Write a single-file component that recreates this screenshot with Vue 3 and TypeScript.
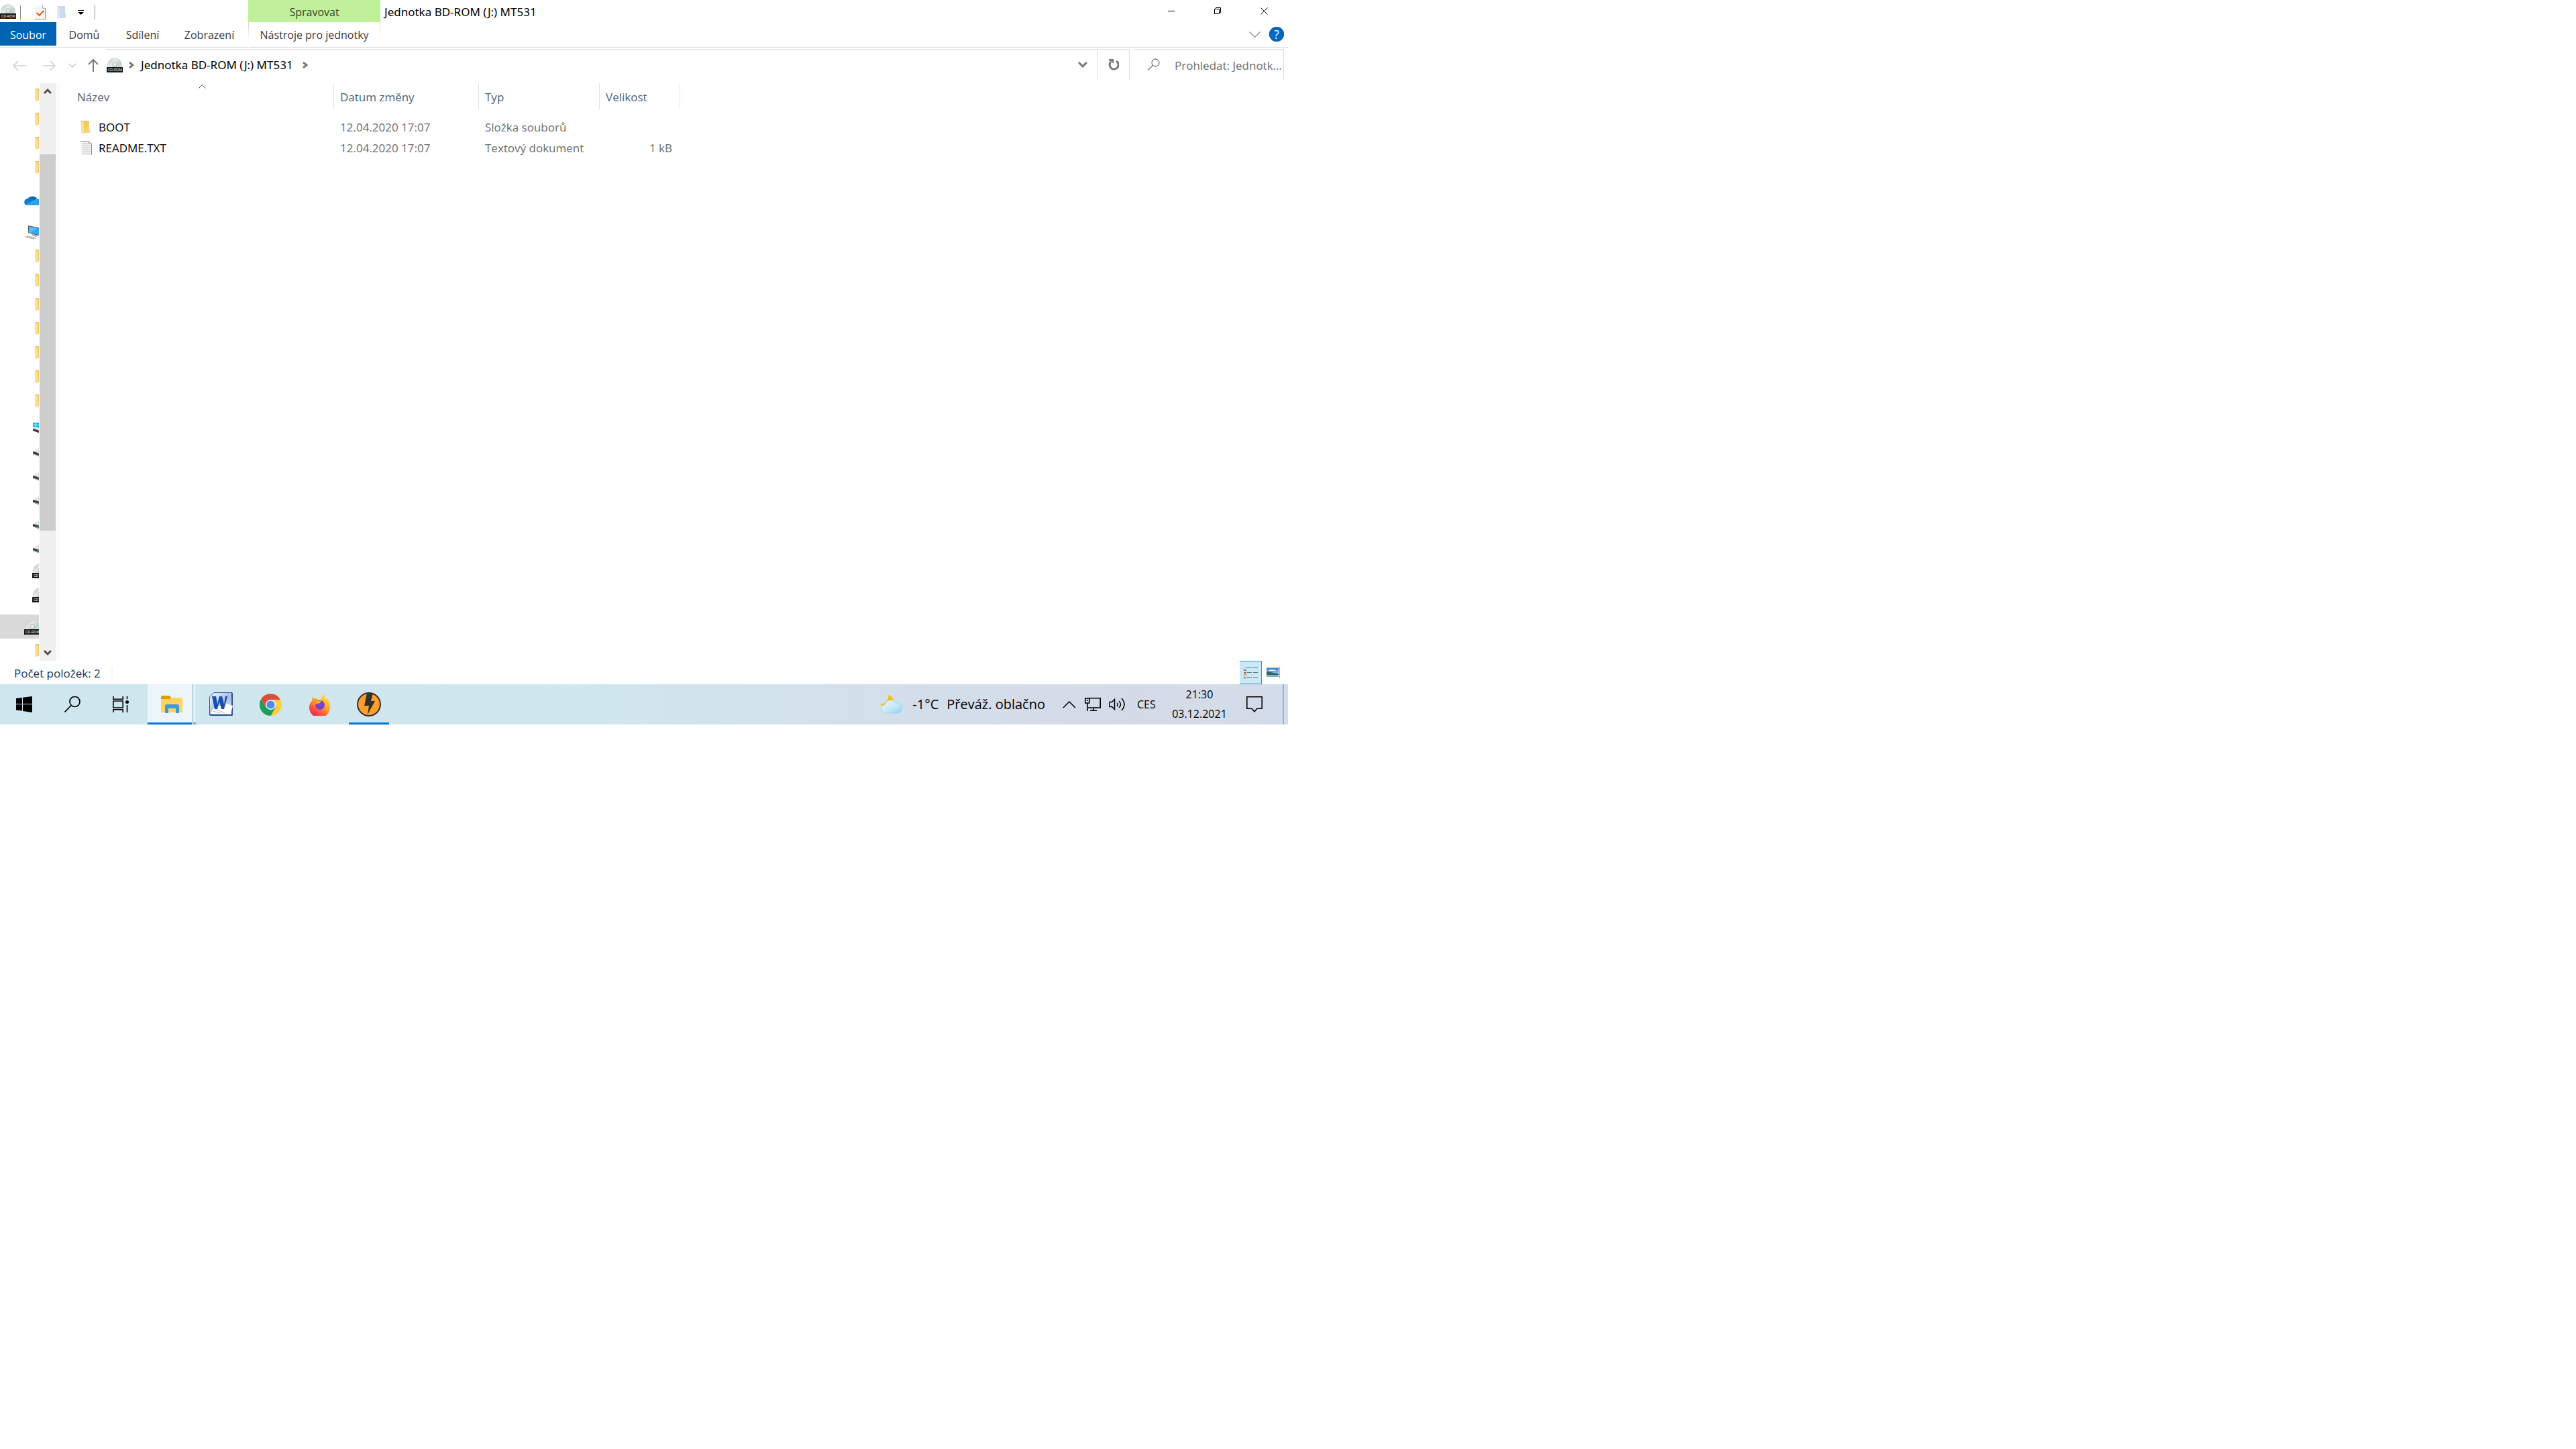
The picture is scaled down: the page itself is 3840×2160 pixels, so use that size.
<script setup lang="ts">
interface TreeRow {
  icon: string
  label: string
  width: number
  height: number
  kind: string
}

interface FileRow {
  icon: string
  name: string
  date: string
  type: string
  size: string
  width: number
  height: number
}

const folder = (label: string): TreeRow => ({ icon: 'folder', label, width: 13, height: 20, kind: 'folder' })
const disk = (label: string): TreeRow => ({ icon: 'disk', label, width: 20, height: 16, kind: 'disk' })
const disc = (label: string): TreeRow => ({ icon: 'disc', label, width: 24, height: 22, kind: 'disc' })

const tree: TreeRow[][] = [
  [folder('1'), folder('2'), folder('3'), folder('4')],
  [{ icon: 'cloud', label: 'OneDrive', width: 24, height: 16, kind: 'root' }],
  [
    { icon: 'computer', label: 'PC', width: 24, height: 22, kind: 'root' },
    folder('5'), folder('6'), folder('7'), folder('8'), folder('9'), folder('10'), folder('11'),
    { icon: 'system', label: 'C', width: 20, height: 16, kind: 'disk' },
    disk('D'), disk('E'), disk('F'), disk('G'), disk('H'),
    disc('I'), disc('J'),
  ],
  [{ icon: 'disc', label: 'MT531', width: 24, height: 22, kind: 'root selected' }, folder('12')],
]

const files: FileRow[] = [
  { icon: 'folder', name: 'BOOT', date: '12.04.2020 17:07', type: 'Složka souborů', size: '', width: 13, height: 20 },
  { icon: 'text', name: 'README.TXT', date: '12.04.2020 17:07', type: 'Textový dokument', size: '1 kB', width: 16, height: 21 },
]
</script>

<template>
  <svg class="defs" aria-hidden="true">
    <defs>
      <linearGradient id="gFront" x1="0" y1="0" x2="1" y2="0"><stop offset="0" stop-color="#ffdc82" /><stop offset="1" stop-color="#ffe9a6" /></linearGradient>
      <linearGradient id="gBack" x1="0" y1="0" x2="1" y2="1"><stop offset="0" stop-color="#e9c35c" /><stop offset="1" stop-color="#fbd777" /></linearGradient>
      <linearGradient id="gDisc" x1="0" y1="0" x2="1" y2="1"><stop offset="0" stop-color="#b9c2c1" /><stop offset=".35" stop-color="#e6eae9" /><stop offset=".6" stop-color="#bed4cc" /><stop offset="1" stop-color="#e2e4e4" /></linearGradient>
      <linearGradient id="gSky" x1="0" y1="0" x2="0" y2="1"><stop offset="0" stop-color="#2f7fe0" /><stop offset="1" stop-color="#dcebf5" /></linearGradient>
      <linearGradient id="gWord" x1="0" y1="0" x2="1" y2="1"><stop offset="0" stop-color="#f8fbff" /><stop offset=".5" stop-color="#a9bfe4" /><stop offset="1" stop-color="#dfe8f6" /></linearGradient>
      <linearGradient id="gFox" x1=".8" y1="0" x2=".2" y2="1"><stop offset="0" stop-color="#fff14a" /><stop offset=".45" stop-color="#ffa02a" /><stop offset=".75" stop-color="#ff4a3a" /><stop offset="1" stop-color="#f0107c" /></linearGradient>
      <linearGradient id="gCloud" x1="0" y1="0" x2="1" y2="1"><stop offset="0" stop-color="#eef8fe" /><stop offset=".6" stop-color="#c4e5f8" /><stop offset="1" stop-color="#8ccdf2" /></linearGradient>
    </defs>
    <symbol id="i-folder" viewBox="0 0 13 20">
      <path d="M0 0h12v11l1 1v6H2z" fill="url(#gBack)" />
      <path d="M0 0l4 3v15l1 2-5-2z" fill="url(#gFront)" />
    </symbol>
    <symbol id="i-disk" viewBox="0 0 20 16">
      <path d="M0 7l9-5 11 3v5l-9 1z" fill="#e2e3e8" />
      <path d="M0 7l11 3 9-3v4l-9 4-11-4z" fill="#333836" />
      <path d="M0 10l10 3v2L0 11z" fill="#aaa" />
      <path d="M7 10h2v1H7z" fill="#37d13b" />
    </symbol>
    <symbol id="i-system" viewBox="0 0 20 16">
      <path d="M0 9l9-6 11 3v5l-9 2z" fill="#e2e3e8" />
      <path d="M0 9l11 3 9-3v3l-9 4-11-4z" fill="#333836" />
      <path d="M7 12h2v1H7z" fill="#37d13b" />
      <path d="M0 0h4v3H0zM5 0h4v3H5zM0 4h4v3H0zM5 4h4v3H5z" fill="#00b7f1" />
    </symbol>
    <symbol id="i-disc" viewBox="0 0 24 22">
      <circle cx="12" cy="11" r="10.500" fill="url(#gDisc)" stroke="#c6cbcb" stroke-width=".6" />
      <circle cx="12" cy="10" r="3.400" fill="#dfe2e3" stroke="#a9b0b1" stroke-width=".7" />
      <circle cx="12" cy="10" r="1" fill="#fff" />
      <rect y="14" width="24" height="8" rx=".5" fill="#16181a" />
    </symbol>
    <symbol id="i-cloud" viewBox="0 0 24 16">
      <path d="M5 6a8 7 0 0 1 14-1l-6 4z" fill="#0364b8" />
      <path d="M5 5c3-1 6 0 14 5L3 15C-1 13-1 6 5 5z" fill="#0f78d4" />
      <path d="M19 5c6 0 7 9 2 10H4l-2-1 11-6z" fill="#28a3ea" />
    </symbol>
    <symbol id="i-computer" viewBox="0 0 24 22">
      <path d="M6 0l18 4v12L6 11z" fill="#51606c" />
      <path d="M7 1.500L23 5v9.500L7 10.500z" fill="#35a8f5" />
      <path d="M7 1.500L20 4.500 9 11l-2-.5z" fill="#57bafa" />
      <path d="M12 13l7 2v2l-8-2z" fill="#9aa4ab" />
      <path d="M0 17l5-2 13 3-4 3z" fill="#d5d9dd" />
      <path d="M1 17l14 3M4 16l13 3" stroke="#8e959c" stroke-dasharray="2 1" fill="none" />
    </symbol>
    <symbol id="i-text" viewBox="0 0 16 21">
      <path d="M0 .5h11l4.500 4.500v16H0z" fill="#fbfbfb" />
      <path d="M0 .5h11.500l4 4V21" stroke="#8d8d8d" fill="none" />
      <path d="M11.500.5v4h4" stroke="#8d8d8d" fill="#e6e6e6" />
      <path d="M1 4.500h9M1 7.500h13M1 10.500h13M1 13.500h13M1 16.500h13M1 19.500h13" stroke="#a0a4a8" />
    </symbol>
  </svg>

  <div class="desktop">
    <main class="window">
      <header class="titlebar">
        <div class="quick">
          <svg class="app-icon" width="24" height="22"><use href="#i-disc" /><text x="2" y="20" class="disc-text">CD-ROM</text></svg>
          <i class="bar first"></i>
          <button class="plain q-props" aria-label="Vlastnosti">
            <svg width="16" height="21" viewBox="0 0 16 21"><path d="M0 0h11l5 5v16H0z" fill="#f6f6f6" /><path d="M11 .5l4.500 4.500v15.500H0" stroke="#8b8b8b" fill="none" /><path d="M11.500.5v4h4" fill="#fff" stroke="#aaa" /><path d="M2.500 11l4 4L13 8" stroke="#f0560f" stroke-width="2" fill="none" /></svg>
          </button>
          <button class="plain q-new" aria-label="Nová složka">
            <svg width="13" height="20" viewBox="0 0 13 20"><path d="M0 0h12v11l1 1v6H2z" fill="#cbdaec" /><path d="M0 0l4 3v15l1 2-5-2z" fill="#dfe9f5" /></svg>
          </button>
          <button class="plain q-more" aria-label="Přizpůsobit">
            <svg width="9" height="7" viewBox="0 0 9 7"><path d="M0 0h9v1H0zM0 3h9L4.500 7z" fill="#000" /></svg>
          </button>
          <i class="bar"></i>
        </div>
        <div class="context">Spravovat</div>
        <h1>Jednotka BD-ROM (J:) MT531</h1>
        <div class="controls">
          <button class="plain" aria-label="Minimalizovat"><svg width="11" height="11"><path d="M0 5h10v1H0z" /></svg></button>
          <button class="plain" aria-label="Obnovit"><svg width="11" height="11"><path d="M.5 2.500h7v7h-7zM2.500 2.500v-2h7v7h-2" fill="none" stroke="#000" /></svg></button>
          <button class="plain" aria-label="Zavřít"><svg width="11" height="11"><path d="M.5.5l10 10M10.500.5l-10 10" stroke="#000" fill="none" /></svg></button>
        </div>
      </header>

      <nav class="tabs">
        <button class="plain file">Soubor</button>
        <button class="plain t-home">Domů</button>
        <button class="plain t-share">Sdílení</button>
        <button class="plain t-view">Zobrazení</button>
        <button class="plain t-drive">Nástroje pro jednotky</button>
        <button class="plain t-expand" aria-label="Rozbalit pás karet"><svg width="17" height="10"><path d="M.5.5l8 8 8-8" fill="none" stroke="#888" stroke-width="1.200" /></svg></button>
        <button class="plain help" aria-label="Nápověda">?</button>
      </nav>

      <div class="address">
        <div class="history">
          <button class="plain" aria-label="Zpět"><svg width="20" height="16"><path d="M9 1L2 8l7 7M2 8h18" stroke="#d9d9d9" stroke-width="2" fill="none" /></svg></button>
          <button class="plain fwd" aria-label="Vpřed"><svg width="20" height="16"><path d="M11 1l7 7-7 7M18 8H0" stroke="#d9d9d9" stroke-width="2" fill="none" /></svg></button>
          <button class="plain recent" aria-label="Poslední umístění"><svg width="12" height="8"><path d="M1 1l5 5 5-5" stroke="#d4d4d4" stroke-width="2" fill="none" /></svg></button>
          <button class="plain up" aria-label="Nahoru"><svg width="16" height="19"><path d="M1 8l7-7 7 7M8 1v18" stroke="#7a7a7a" stroke-width="2" fill="none" /></svg></button>
        </div>
        <div class="path">
          <svg width="24" height="22"><use href="#i-disc" /><text x="2" y="20" class="disc-text">CD-ROM</text></svg>
          <svg class="crumb" width="8" height="10"><path d="M1 1l5 4-5 4" stroke="#777" stroke-width="3" fill="none" /></svg>
          <a href="#">Jednotka BD-ROM (J:) MT531</a>
          <svg class="crumb" width="8" height="10"><path d="M1 1l5 4-5 4" stroke="#777" stroke-width="3" fill="none" /></svg>
          <button class="plain drop" aria-label="Předchozí umístění"><svg width="14" height="9"><path d="M1 1l6 6 6-6" stroke="#777" stroke-width="3" fill="none" /></svg></button>
        </div>
        <button class="plain refresh" aria-label="Aktualizovat"><svg width="16" height="17"><path d="M12 3a6.500 6.500 0 1 1-8 1" stroke="#777" stroke-width="3" fill="none" /><path d="M1 0h7v7L6 5 5 4 1 2z" fill="#777" /></svg></button>
        <label class="search">
          <svg width="18" height="19"><circle cx="11.500" cy="6.500" r="5.500" fill="none" stroke="#777" stroke-width="1.300" /><path d="M7.500 10.500L0 18" stroke="#777" stroke-width="1.300" /></svg>
          <input type="text" placeholder="Prohledat: Jednotk..." aria-label="Prohledat">
        </label>
      </div>

      <div class="content">
        <aside class="tree">
          <ul v-for="(group, g) in tree" :key="g">
            <li v-for="row in group" :key="row.label" :class="row.kind">
              <svg :width="row.width" :height="row.height">
                <use :href="'#i-' + row.icon" />
                <text v-if="row.icon === 'disc'" x="2" y="20" class="disc-text">{{ row.kind === 'disc' ? 'CD' : 'CD-ROM' }}</text>
              </svg>
            </li>
          </ul>
        </aside>
        <div class="scroll">
          <button class="plain" aria-label="Nahoru"><svg width="12" height="9"><path d="M1 7l5-5 5 5" stroke="#505050" stroke-width="3" fill="none" /></svg></button>
          <div class="track"><div class="thumb"></div></div>
          <button class="plain" aria-label="Dolů"><svg width="12" height="9"><path d="M1 2l5 5 5-5" stroke="#505050" stroke-width="3" fill="none" /></svg></button>
        </div>
        <section class="list">
          <table>
            <thead>
              <tr>
                <th class="c-name">Název<svg class="sort" width="11" height="6"><path d="M.5 5.500l5-5 5 5" stroke="#444" fill="none" /></svg></th>
                <th class="c-date">Datum změny</th>
                <th class="c-type">Typ</th>
                <th class="c-size">Velikost</th>
              </tr>
            </thead>
            <tbody>
              <tr v-for="f in files" :key="f.name">
                <td><div class="file-name"><span class="file-icon"><svg :width="f.width" :height="f.height"><use :href="'#i-' + f.icon" /></svg></span>{{ f.name }}</div></td>
                <td>{{ f.date }}</td>
                <td>{{ f.type }}</td>
                <td class="size">{{ f.size }}</td>
              </tr>
            </tbody>
          </table>
        </section>
      </div>

      <footer class="status">
        <span class="count">Počet položek: 2</span>
        <i class="split"></i>
        <button class="plain details" aria-label="Podrobnosti">
          <svg width="22" height="18"><path d="M.5 0v18M.5.5h3v16.500h-3" stroke="#a3a3a3" fill="#fff" /><path d="M1 4h2v2H1z" fill="#4b6fd0" /><path d="M1 8h2v2H1z" fill="#c3392b" /><path d="M1 11h2v2H1z" fill="#d79b3c" /><path d="M1 15h2v1H1z" fill="#555" /><path d="M5 1.500h7M14 1.500h7M5 8.500h7M14 8.500h7M5 15.500h7M14 15.500h7" stroke="#6f7577" /></svg>
        </button>
        <button class="plain thumbs" aria-label="Velké ikony">
          <svg width="21" height="17"><path d="M0 .5h20.500v16" stroke="#a3a3a3" fill="#fff" /><rect x="1" y="2" width="18" height="13" fill="url(#gSky)" /><path d="M4 6c3-3 7-2 12 0z" fill="#e8f2fb" /><path d="M1 7c6 0 10 3 18 3v2H1z" fill="#2c6660" /><path d="M1 12h18v3H1z" fill="#7fb0cb" /></svg>
        </button>
      </footer>
    </main>

    <div class="taskbar">
      <div class="apps">
        <button class="plain" aria-label="Start"><svg width="24" height="24"><path d="M0 3l9-1v9H0zM10 1.800L24 0v11H10zM0 12h9v9.500l-9-1zM10 12h14v12l-14-2z" /></svg></button>
        <button class="plain" aria-label="Hledat"><svg width="24" height="24"><circle cx="15.500" cy="8" r="7.500" fill="none" stroke="#000" stroke-width="1.700" /><path d="M10 13.500L.5 23.500" stroke="#000" stroke-width="1.700" /></svg></button>
        <button class="plain" aria-label="Zobrazení úkolů"><svg width="24" height="24"><path d="M.8 0v4.200h14.400V0M.8 24v-4.200h14.400V24M.8 7h14.400v10H.8zM21.500 0v4M21.500 13v11" stroke="#000" stroke-width="1.600" fill="none" /><circle cx="21.500" cy="8.500" r="2.500" /></svg></button>
        <button class="plain active" aria-label="Průzkumník souborů">
          <svg width="32" height="28"><path d="M0 3a2 2 0 0 1 2-2h11l2 3-2 3H0z" fill="#dd9b03" /><path d="M0 6h13l3-2h14a2 2 0 0 1 2 2v18a2 2 0 0 1-2 2H2a2 2 0 0 1-2-2z" fill="#ffd35c" /><path d="M6 27V17a3 3 0 0 1 3-3h15a3 3 0 0 1 3 3v10h-5v-7H11v7z" fill="#3c99dc" /></svg>
          <i class="stack"></i>
        </button>
        <button class="plain" aria-label="Word">
          <svg width="35" height="36"><path d="M7 .5h27V34H.5V7z" fill="url(#gWord)" stroke="#2f5597" /><path d="M34 1v33H1" fill="none" stroke="#183a80" stroke-width="1.500" /><path d="M5 25l18-9 12 4-3 12H2z" fill="#fff" /><path d="M5 28l12 3M9 25l14 6" stroke="#aebbd0" /><path d="M4 6h6l2 12L15 6h4l3 12 2-12h3l-5 19h-4l-3-11-3 11H8z" fill="#1550b0" /></svg>
        </button>
        <button class="plain" aria-label="Chrome">
          <svg width="33" height="33"><circle cx="16.500" cy="16.500" r="16.500" fill="#ffcd42" /><path d="M2.200 8.200A16.500 16.500 0 0 0 16.500 33l7.200-12.500L9.300 20.600z" fill="#15a05c" /><path d="M2.200 8.200a16.500 16.500 0 0 1 28.700.8H16.500L9.300 20.600z" fill="#db4c3f" /><circle cx="16.500" cy="16.500" r="7.500" fill="#f2f6fa" /><circle cx="16.500" cy="16.500" r="6" fill="#4c8bf5" /></svg>
        </button>
        <button class="plain" aria-label="Firefox">
          <svg width="32" height="33"><path d="M5 4l3 4 3-2v3h6l3-9c3 3 4 5 4 8l3-1c4 5 5 10 4 14a15.500 15.500 0 0 1-31-1c0-4 2-7 4-9z" fill="url(#gFox)" /><circle cx="16" cy="17" r="7" fill="#7b3fd6" /><path d="M5 8h6l5 4-3 3-4 1c-2-2-4-3-4-8z" fill="#ff9a1f" /><path d="M11 12l7-2-2 4-5 1z" fill="#ffb32b" /></svg>
        </button>
        <button class="plain running" aria-label="DAEMON Tools">
          <svg width="36" height="36"><circle cx="18" cy="18" r="17" fill="#ff9f2b" stroke="#333130" stroke-width="2" /><path d="M15 1l9 0-3 12h6L16 33l2-13h-7z" fill="#333130" /></svg>
        </button>
      </div>
      <div class="tray">
        <button class="plain weather">
          <svg width="34" height="28"><path d="M12 0c8 2 9 9 5 13S4 20 0 13c3 1 6 0 9-3s4-6 3-10z" fill="#fbbd0a" /><path d="M8 27a6.500 6.500 0 0 1 0-13 8 8 0 0 1 15-2 7.500 7.500 0 0 1 4 15z" fill="url(#gCloud)" stroke="#9ccdea" stroke-width=".7" /></svg>
          <span class="temp">-1°C</span><span>Převáž. oblačno</span>
        </button>
        <button class="plain arrow" aria-label="Skryté ikony"><svg width="20" height="12"><path d="M1 11l9-9 9 9" fill="none" stroke="#000" stroke-width="1.500" /></svg></button>
        <button class="plain" aria-label="Síť"><svg width="24" height="20"><path d="M7 .8h16.200V15H5M.8 1h6v7h-6zM3.800 3v2M4 8v12M13 15v4M8 19.200h10" fill="none" stroke="#000" stroke-width="1.600" /></svg></button>
        <button class="plain vol" aria-label="Hlasitost"><svg width="25" height="20"><path d="M1 6.500h3.500l4-4v15l-4-4H1zM12 8q2 2 0 5M15 5q5 5 0 10M19 1q8 9 0 18" fill="none" stroke="#000" stroke-width="1.500" /></svg></button>
        <span class="lang">CES</span>
        <time class="clock"><span>21:30</span><span>03.12.2021</span></time>
        <button class="plain notes" aria-label="Oznámení"><svg width="24" height="24"><path d="M.8.800h22.400v17.400H16l-4 4.500-4-4.500H.8z" fill="none" stroke="#000" stroke-width="1.600" /></svg></button>
        <i class="peek"></i>
      </div>
    </div>
  </div>
</template>

<style>
body {
  background: #fff;
}
</style>

<style scoped>
.defs {
  position: absolute;
  width: 0;
  height: 0;
}
.disc-text {
  font-family: "Liberation Sans", sans-serif;
  font-size: 5px;
  fill: #fff;
}
.desktop {
  width: 50%;
  min-height: 50vh;
  display: flex;
  flex-direction: column;
  font-family: "Open Sans", "Noto Sans", sans-serif;
  font-size: 17px;
  line-height: 24px;
  color: #000;
}
.desktop svg {
  display: block;
  flex: none;
}
.plain {
  border: 0;
  margin: 0;
  padding: 0;
  background: none;
  font: inherit;
  color: inherit;
  display: flex;
  align-items: center;
  justify-content: center;
  flex: none;
  white-space: nowrap;
}
.window {
  flex: 1;
  display: flex;
  flex-direction: column;
}
.titlebar {
  display: flex;
  height: 33px;
}
.quick {
  width: 370px;
  display: flex;
  align-items: center;
  padding-top: 4px;
  box-sizing: border-box;
}
.app-icon {
  margin-top: -4px;
}
.bar {
  width: 1px;
  height: 21px;
  background: #8c8c8c;
}
.bar.first {
  margin-left: 6px;
}
.q-props {
  margin-left: 21px;
}
.q-new {
  margin-left: 17px;
}
.q-more {
  margin: 0 16px 0 18px;
}
.context {
  width: 197px;
  background: #c0f19a;
  color: #35402c;
  font-size: 16px;
  line-height: 36px;
  text-align: center;
}
h1 {
  margin: 0 0 0 6px;
  font-family: "Noto Sans", sans-serif;
  font-size: 17px;
  font-weight: 400;
  line-height: 35px;
  white-space: nowrap;
}
.controls {
  display: flex;
  margin-left: auto;
  padding-right: 1px;
}
.controls .plain {
  width: 69px;
  height: 32px;
}
.tabs {
  display: flex;
  height: 37px;
  border-bottom: 1px solid #dadbdc;
  font-size: 16px;
  color: #3b3b3b;
}
.tabs .plain {
  height: 38px;
}
.tabs .file {
  width: 84px;
  height: 35px;
  padding-top: 2px;
  box-sizing: border-box;
  background: #0063b1;
  color: #fff;
}
.t-home {
  width: 83px;
}
.t-share {
  width: 91px;
}
.t-view {
  width: 108px;
}
.tabs .t-drive {
  width: 197px;
  margin-left: 4px;
  border-left: 1px solid;
  border-right: 1px solid;
  border-image: linear-gradient(#cfcfcf, #fff 28px) 1;
}
.t-expand {
  margin: 0 13px 0 auto;
}
.tabs .help {
  width: 22px;
  height: 22px;
  margin: 7px 6px 0 0;
  border-radius: 50%;
  background: #0067c5;
  box-shadow: inset 0 0 0 1px #1b5ea0;
  color: #fff;
  font-size: 18px;
}
.address {
  display: flex;
  height: 46px;
  margin: 2px 6px 5px 0;
}
.history {
  width: 158px;
  display: flex;
  padding-left: 18px;
  padding-top: 3px;
  box-sizing: border-box;
}
.fwd {
  margin-left: 26px;
}
.recent {
  margin-left: 18px;
}
.up {
  margin-left: 17px;
}
.path {
  flex: 1;
  display: flex;
  align-items: center;
  border-top: 1px solid #dadada;
  padding-left: 1px;
}
.path a {
  color: inherit;
  text-decoration: none;
  font-family: "Noto Sans", sans-serif;
  margin: 1px 14px 0 10px;
}
.path .crumb:nth-of-type(2) {
  margin-left: 9px;
}
.drop {
  margin: 0 15px 0 auto;
}
.refresh.plain {
  width: 48px;
  border: solid #dadada;
  border-width: 1px 1px 0;
}
.search {
  width: 224px;
  display: flex;
  align-items: center;
  box-sizing: border-box;
  margin-left: 6px;
  padding-left: 21px;
  border: solid #dadada;
  border-width: 1px 1px 0 0;
}
.search input {
  flex: 1;
  min-width: 0;
  border: 0;
  padding: 0;
  margin: 3px 0 0 22px;
  outline: 0;
  font: inherit;
  background: none;
}
.search input::placeholder {
  color: #6d6d6d;
  opacity: 1;
}
.content {
  flex: 1 1 0;
  min-height: 0;
  display: flex;
}
.tree {
  width: 58px;
  overflow: hidden;
  display: flex;
  flex-direction: column;
  gap: 12px;
  height: 861px;
}
.tree ul {
  list-style: none;
  margin: 0;
  padding: 0;
}
.tree li {
  height: 36px;
  box-sizing: border-box;
  display: flex;
  align-items: center;
}
.folder {
  padding-left: 52px;
}
.disk {
  padding: 8px 0 0 49px;
}
.disc {
  padding: 2px 0 0 48px;
}
.root {
  padding: 2px 0 0 36px;
}
.selected {
  background: #d9d9d9;
}
.scroll {
  width: 25px;
  margin-left: 1px;
  background: #f0f0f0;
  display: flex;
  flex-direction: column;
}
.scroll .plain {
  height: 25px;
  padding-right: 1px;
}
.track {
  flex: 1;
  padding: 81px 1px 0 0;
}
.thumb {
  height: 561px;
  background: #cdcdcd;
}
.list {
  flex: 1;
  margin-left: 2px;
  border-left: 2px solid #f7f7f7;
}
table {
  table-layout: fixed;
  width: 926px;
  border-spacing: 0;
}
th {
  box-sizing: border-box;
  height: 39px;
  padding: 3px 0 0 9px;
  border-right: 1px solid #e2e2e2;
  font-weight: 400;
  text-align: left;
  color: #4c607a;
}
.c-name {
  position: relative;
  width: 410px;
  padding-left: 27px;
}
.sort {
  position: absolute;
  top: 2px;
  left: 208px;
}
.c-date {
  width: 216px;
}
.c-type {
  width: 180px;
}
.c-size {
  width: 120px;
}
tbody::before {
  content: "";
  display: block;
  height: 11px;
}
td {
  height: 31px;
  padding: 0 0 0 9px;
  color: #6d6d6d;
}
.file-name {
  display: flex;
  align-items: center;
  padding-left: 24px;
  color: #000;
}
.file-icon {
  width: 26px;
}
td.size {
  padding-right: 12px;
  text-align: right;
}
.status {
  display: flex;
  height: 35px;
  align-items: center;
  color: #1e395b;
}
.count {
  width: 145px;
  padding: 2px 0 0 21px;
  white-space: nowrap;
}
.split {
  width: 2px;
  height: 17px;
  background: #f5f5f5;
}
.details.plain {
  width: 33px;
  height: 35px;
  margin-left: auto;
  padding-left: 2px;
  box-sizing: border-box;
  border: solid #26a0da;
  border-width: 1px 1px 1px 0;
  background: #cbe8f6;
}
.thumbs {
  margin: 0 12px 0 6px;
}
.taskbar {
  display: flex;
  justify-content: space-between;
  height: 60px;
  background: linear-gradient(90deg, #d0e6ee 0%, #d0e7ef 45%, #d3dfeb 68%, #d5dae8 88%, #d3dcea 100%);
}
.apps {
  display: flex;
}
.apps .plain {
  width: 72px;
  margin-right: 2px;
}
.apps .plain:nth-child(-n+3) {
  margin-right: 0;
}
.apps .active {
  position: relative;
  margin-left: 4px;
  margin-right: 1px;
  background: #ecf5f9;
  box-shadow: inset 0 -3px #0078d7;
}
.stack {
  position: absolute;
  top: 0;
  right: 0;
  bottom: 0;
  width: 4px;
  background: #deedf3;
  border-left: 2px solid #bdd2da;
  box-shadow: inset 0 -3px #66afe7;
}
.apps .running {
  width: 60px;
  margin-left: 5px;
  box-shadow: inset 0 -3px #0078d7;
}
.tray {
  display: flex;
  align-items: center;
}
.weather {
  font-size: 20px;
}
.temp {
  margin: 0 12px 0 14px;
}
.arrow {
  margin: 0 13px 0 26px;
}
.vol {
  margin-left: 12px;
}
.lang {
  width: 29px;
  margin-left: 17px;
  font-size: 16px;
}
.clock {
  width: 84px;
  margin: 0 28px 0 22px;
  display: flex;
  flex-direction: column;
  align-items: center;
  font-size: 16px;
  line-height: 29px;
}
.peek {
  width: 6px;
  height: 60px;
  margin-left: 30px;
  border-left: 2px solid #a6afbf;
}
</style>
